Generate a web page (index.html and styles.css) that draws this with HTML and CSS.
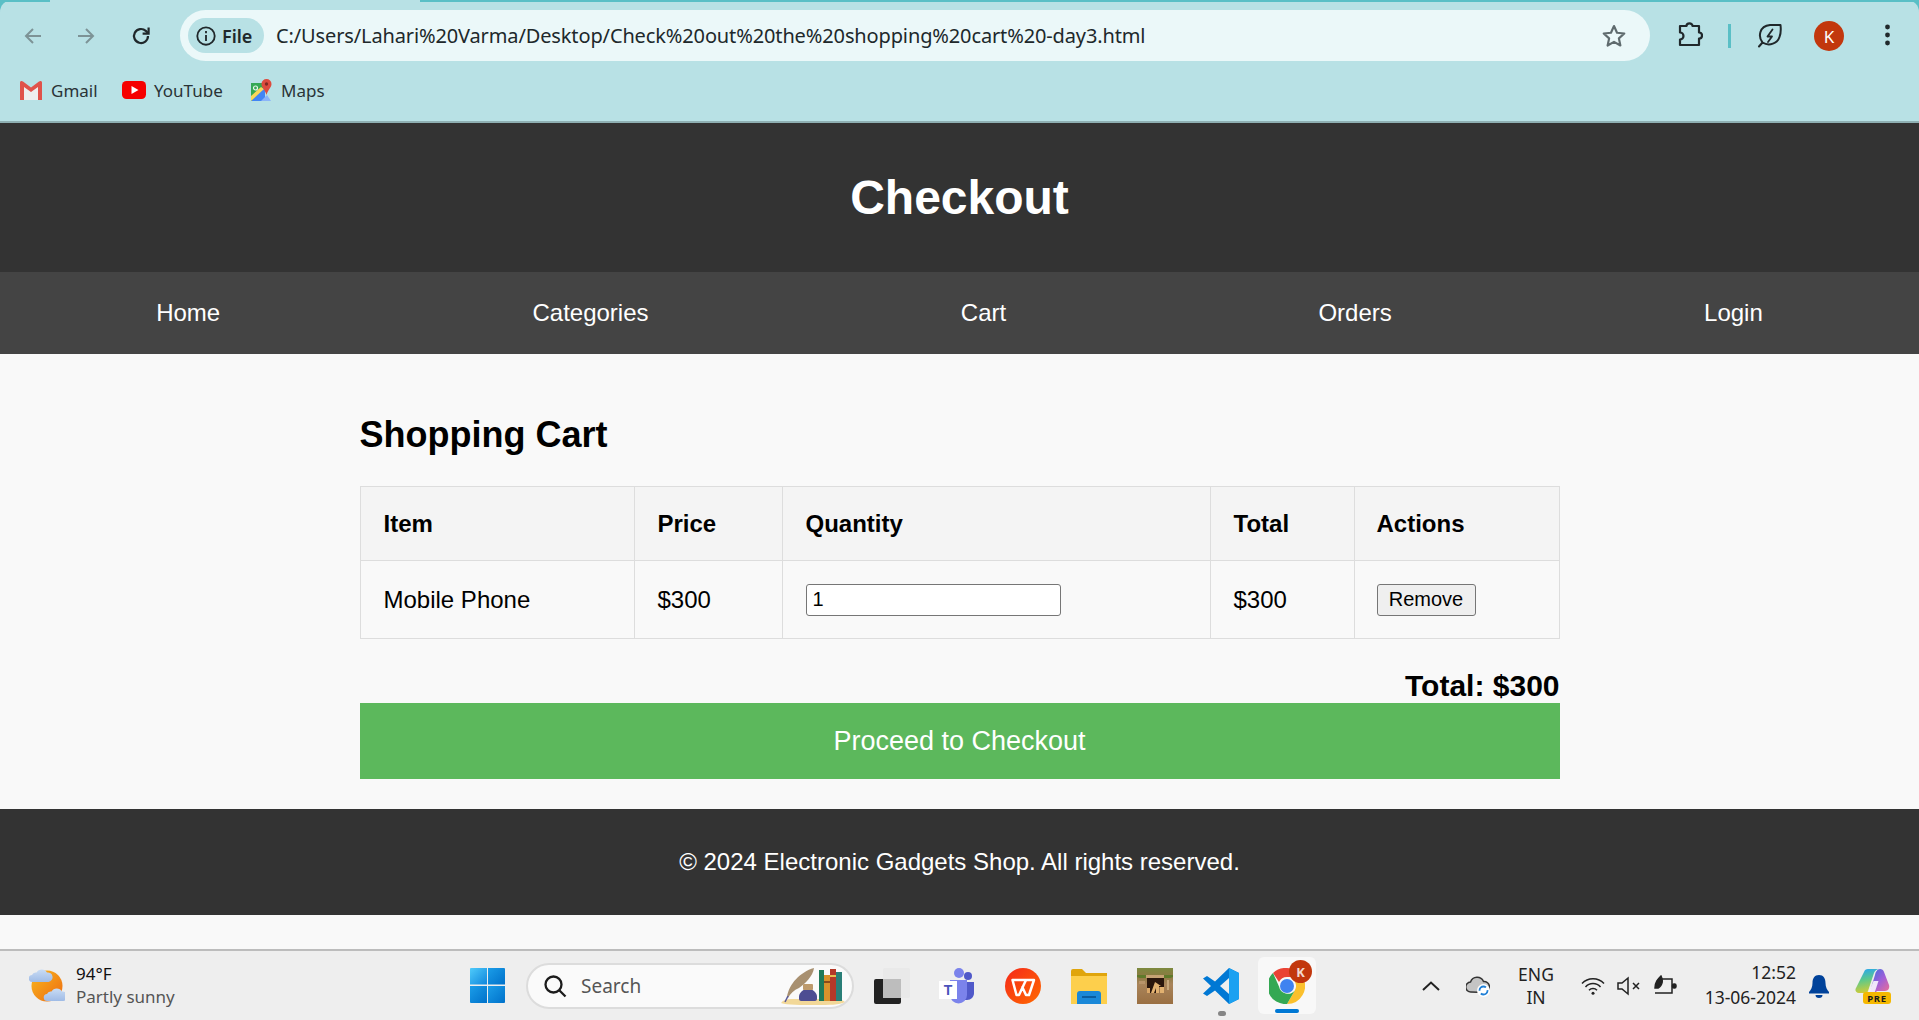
FILE: index.html
```html
<!DOCTYPE html>
<html lang="en">
<head>
<meta charset="utf-8">
<title>Checkout</title>
<link rel="stylesheet" href="styles.css">
</head>
<body>
<div class="browser">
  <div class="tabstrip"><span class="strip-a"></span><span class="strip-b"></span></div>
  <div class="frame">
    <div class="toolbar">
      <svg class="tb-icon back" viewBox="0 0 24 24" fill="none" stroke="#7d9396" stroke-width="2"><path d="M20 12H5M12 5l-7 7 7 7"/></svg>
      <svg class="tb-icon fwd" viewBox="0 0 24 24" fill="none" stroke="#7d9396" stroke-width="2"><path d="M4 12h15M12 5l7 7-7 7"/></svg>
      <svg class="tb-icon reload" viewBox="0 0 24 24" fill="none" stroke="#20282b" stroke-width="2.2"><path d="M19 12a7 7 0 1 1-2.2-5.1L19 9"/><path d="M19.6 3.6V9.6h-6" fill="none"/></svg>
      <div class="omnibox">
        <div class="chip">
          <svg class="chip-i" viewBox="0 0 24 24" fill="none" stroke="#20282b" stroke-width="2"><circle cx="12" cy="12" r="9.5"/><path d="M12 11v6.5M12 6.5v2.4"/></svg>
          <span class="chip-t">File</span>
        </div>
        <span class="url">C:/Users/Lahari%20Varma/Desktop/Check%20out%20the%20shopping%20cart%20-day3.html</span>
        <svg class="star" viewBox="0 0 24 24" fill="none" stroke="#5f6b6e" stroke-width="2" stroke-linejoin="round"><path d="M12 2.8l2.8 6.2 6.7.7-5 4.5 1.4 6.6-5.9-3.4-5.9 3.4 1.4-6.6-5-4.5 6.7-.7z"/></svg>
      </div>
      <svg class="ext" viewBox="0 0 26 26" fill="none" stroke="#20282b" stroke-width="2.2" stroke-linejoin="round"><path d="M3 4h6.500a3 2.600 0 0 1 6 0H22v6.500a2.600 2.600 0 0 1 0 6V23H3v-5.500a3.500 3.500 0 0 0 0-7z"/></svg>
      <span class="sep"></span>
      <svg class="leaf" viewBox="0 0 26 26" fill="none" stroke="#20282b" stroke-width="2" stroke-linejoin="round" stroke-linecap="round"><path d="M2 24.500l3.500-4M5.500 20.500C1 15 2 4 13 3h10.500c.5 4 .5 8-1 12-2 6-10 10-17 5.500z"/><path d="M15.500 7.500l-5 7h4.500l-4 5.500" stroke-width="1.800"/></svg>
      <span class="avatar">K</span>
      <svg class="dots" viewBox="0 0 6 24" fill="#20282b"><circle cx="3" cy="4" r="2.400"/><circle cx="3" cy="12" r="2.400"/><circle cx="3" cy="20" r="2.400"/></svg>
    </div>
    <div class="bookmarks">
      <a class="bm bm-gmail">
        <svg class="bm-i" viewBox="0 0 24 20"><path d="M1 3l11 8 11-8v17H1z" fill="#eeeeee"/><path d="M1 20V2.500C1 1 2.500.5 4 1.500l8 6 8-6c1.500-1 3-.5 3 1V20h-4V7l-7 5-7-5v13z" fill="#e0524a"/></svg>
        <span>Gmail</span>
      </a>
      <a class="bm bm-yt">
        <svg class="bm-i" viewBox="0 0 24 18"><rect width="24" height="18" rx="4.500" fill="#f60000"/><path d="M9.500 5l7 4-7 4z" fill="#fff"/></svg>
        <span>YouTube</span>
      </a>
      <a class="bm bm-maps">
        <svg class="bm-i maps-i" viewBox="0 0 22 24"><path d="M1 5h14v18H1z" fill="#34a853"/><path d="M1 23l14-14v14z" fill="#4285f4"/><path d="M1 23V18L11 9l3 2z" fill="#fbd75b"/><path d="M11 23l6-6 4 6z" fill="#8ab4f8"/><circle cx="5.500" cy="10" r="2" fill="none" stroke="#e8f5e9" stroke-width="1.200"/><path d="M16.500 1a5 5 0 0 1 5 5c0 3.500-3.500 5.500-5 11-1.500-5.500-5-7.500-5-11a5 5 0 0 1 5-5z" fill="#dd4b3e"/><circle cx="16.500" cy="6" r="1.700" fill="#802a22"/></svg>
        <span>Maps</span>
      </a>
    </div>
  </div>
</div>

<div class="page">
  <header class="site-header"><h1>Checkout</h1></header>
  <nav class="site-nav">
    <a>Home</a><a>Categories</a><a>Cart</a><a>Orders</a><a>Login</a>
  </nav>
  <main class="main">
    <h2>Shopping Cart</h2>
    <table class="cart">
      <colgroup><col class="c1"><col class="c2"><col class="c3"><col class="c4"><col class="c5"></colgroup>
      <thead><tr><th>Item</th><th>Price</th><th>Quantity</th><th>Total</th><th class="last">Actions</th></tr></thead>
      <tbody>
        <tr>
          <td>Mobile Phone</td>
          <td>$300</td>
          <td><input class="qty" type="number" value="1"></td>
          <td>$300</td>
          <td class="last"><button class="remove" type="button">Remove</button></td>
        </tr>
      </tbody>
    </table>
    <div class="grand">Total: $300</div>
    <button class="proceed" type="button">Proceed to Checkout</button>
  </main>
  <footer class="site-footer">© 2024 Electronic Gadgets Shop. All rights reserved.</footer>
  <div class="filler"></div>
</div>

<div class="taskbar">
  <div class="weather">
    <svg class="wx" viewBox="0 0 36 36">
      <defs><linearGradient id="sun" x1="0" y1="0" x2="1" y2="1"><stop offset="0" stop-color="#f8b820"/><stop offset="1" stop-color="#ee6a10"/></linearGradient><linearGradient id="cl" x1="0" y1="0" x2="0" y2="1"><stop offset="0" stop-color="#c9dcf4"/><stop offset="1" stop-color="#9fbbe6"/></linearGradient></defs>
      <circle cx="18" cy="18" r="15.500" fill="url(#sun)"/>
      <path d="M3.500 14a3.500 3.500 0 0 1-.5-7 4 4 0 0 1 4.500-2.500 6 6 0 0 1 10.500 0 4.500 4.500 0 0 1 1.500 9.500z" fill="url(#cl)"/>
      <path d="M18.500 33a3.500 3.500 0 0 1-.5-7 4 4 0 0 1 4.500-2.500 6 6 0 0 1 10.500 0 4.500 4.500 0 0 1 1.500 9.500z" fill="url(#cl)"/>
    </svg>
    <div class="wx-text"><div class="wx-temp">94°F</div><div class="wx-desc">Partly sunny</div></div>
  </div>

  <svg class="win" viewBox="0 0 35 35">
    <defs><linearGradient id="w1" x1="0" y1="0" x2="1" y2="1"><stop offset="0" stop-color="#4fcbfb"/><stop offset="1" stop-color="#0f86dc"/></linearGradient><linearGradient id="w2" x1="0" y1="0" x2="1" y2="1"><stop offset="0" stop-color="#1b9de8"/><stop offset="1" stop-color="#0071ca"/></linearGradient></defs>
    <path d="M1 0h16v16.500H0V1a1 1 0 0 1 1-1z" fill="url(#w1)"/><path d="M18 0h16a1 1 0 0 1 1 1v15.500H18z" fill="url(#w2)"/><path d="M0 18h17v17H1a1 1 0 0 1-1-1z" fill="url(#w2)"/><path d="M18 18h17v16a1 1 0 0 1-1 1H18z" fill="url(#w2)"/>
  </svg>

  <div class="search">
    <svg class="search-i" viewBox="0 0 24 24" fill="none" stroke="#1c1c1c" stroke-width="2.300"><circle cx="10.500" cy="10.500" r="8"/><path d="M16.500 16.500L22.500 22.500"/></svg>
    <span class="search-t">Search</span>
    <svg class="books" viewBox="0 0 66 38">
      <path d="M1 36c2-3 6-4 10-4h44c4 0 8 1 10 3-6 3-15 3-30 3-14 0-28 0-34-2z" fill="#f2d898"/>
      <path d="M7 30C9 17 20 5 34 1c-1 8-9 16-15 20-5 2-9 6-11 10z" fill="#a89070"/>
      <path d="M5 35l3-6" stroke="#5a5a9a" stroke-width="1.500"/>
      <path d="M19 30c0-4 3-6 6-8h6c3 2 6 4 6 8v2c0 1-1 2-2 2H21c-1 0-2-1-2-2z" fill="#4d4d92"/>
      <rect x="23" y="17" width="10" height="6" rx="1" fill="#bd9a6c"/>
      <rect x="39" y="3" width="5" height="31" fill="#1f7a5a"/>
      <rect x="44" y="8" width="6" height="26" fill="#d8922c"/>
      <rect x="44" y="14" width="6" height="2" fill="#8a4a1a"/>
      <rect x="50" y="2" width="6" height="32" fill="#b53828"/>
      <rect x="50" y="8" width="6" height="2" fill="#e6c050"/>
      <rect x="56" y="5" width="6" height="29" fill="#2a7f78"/>
    </svg>
  </div>

  <svg class="ti taskview" viewBox="0 0 36 36"><rect x="0" y="11" width="27" height="25" rx="2" fill="#222"/><rect x="9" y="0" width="27" height="30" rx="2" fill="#e8e8e8" fill-opacity=".85"/><rect x="9" y="11" width="18" height="19" fill="#bdbdbd"/></svg>

  <svg class="ti teams" viewBox="0 0 36 36"><circle cx="29" cy="8" r="4" fill="#5059c9"/><path d="M22 14h13v11c0 4-3 7-7 7h-6z" fill="#5059c9"/><circle cx="20" cy="5" r="5" fill="#7b83eb"/><path d="M11 12h17v15a8.500 8.500 0 0 1-17 0z" fill="#7b83eb"/><rect x="0" y="13" width="18" height="18" fill="#fff"/><text x="9" y="27" class="teams-t">T</text></svg>

  <svg class="ti wps" viewBox="0 0 36 36">
    <defs><linearGradient id="wg" x1="0" y1="0" x2="1" y2="1"><stop offset="0" stop-color="#f5281a"/><stop offset="1" stop-color="#ff6a00"/></linearGradient></defs>
    <circle cx="18" cy="18" r="18" fill="url(#wg)"/>
    <path d="M7.500 12H29L24 27h-3l-3.500-7.500L14 27h-2.500z" fill="none" stroke="#fff" stroke-width="2.500" stroke-linejoin="round"/>
    <path d="M21 12l-3.500 7.500" stroke="#fff" stroke-width="2.500"/>
  </svg>

  <svg class="ti folder" viewBox="0 0 36 36"><path d="M0 3a2 2 0 0 1 2-2h9l4 4h21v31H0z" fill="#e0a50c"/><path d="M0 8h36v28H0z" fill="#fdcf4c"/><path d="M6 36v-10a3 3 0 0 1 3-3h18a3 3 0 0 1 3 3v10z" fill="#1a88d8"/><rect x="11" y="28" width="14" height="2" fill="#0a5da0"/></svg>

  <svg class="ti game" viewBox="0 0 36 36">
    <defs><linearGradient id="gb" x1="0" y1="0" x2="0" y2="1"><stop offset="0" stop-color="#7c8a3e"/><stop offset=".22" stop-color="#8b7a42"/><stop offset=".45" stop-color="#a9845a"/><stop offset="1" stop-color="#9a6f42"/></linearGradient></defs>
    <rect width="36" height="36" fill="url(#gb)"/>
    <path d="M0 7h36v2l-3 1H3L0 9z" fill="#5f7a2a"/>
    <rect x="9" y="7" width="18" height="3" fill="#c6a274"/>
    <path d="M10 10h17v9H22v6H10z" fill="#2a160c"/>
    <path d="M18 14l-4 11h3l2-5v5h3V18h2z" fill="#e2b170"/>
    <rect x="10" y="20" width="3" height="5" fill="#dca868"/>
    <rect x="23" y="19" width="4" height="6" fill="#e2b170"/>
    <rect x="2" y="13" width="6" height="3" fill="#b8946a"/>
    <rect x="30" y="12" width="2" height="10" fill="#c8a87c"/>
  </svg>

  <div class="ti-wrap vscode-wrap">
    <svg class="ti vscode" viewBox="0 0 36 36"><path d="M26 0l10 5v26l-10 5-14-13.500L4 28 0 25.500 8 18 0 10.500 4 8l8 5.500z" fill="#0078d4"/><path d="M26 0l10 5v26l-10 5z" fill="#1ba1f1"/><path d="M26 10l-9 8 9 8z" fill="#eeeeee"/></svg>
    <span class="run-dot"></span>
  </div>

  <div class="chrome-wrap">
    <svg class="chrome" viewBox="0 0 36 36">
      <path d="M18 0a18 18 0 0 1 15.600 9H18a9 9 0 0 0-8 5L4 5a18 18 0 0 1 14-5z" fill="#ea4335"/>
      <path d="M33.600 9A18 18 0 0 1 18 36l7.800-13.500A9 9 0 0 0 26 14z" fill="#fbc02d"/>
      <path d="M4 5a18 18 0 0 0 14 31l7.800-13.500a9 9 0 0 1-15.800-4z" fill="#34a853"/>
      <circle cx="18" cy="18" r="7" fill="#3f83f0"/>
    </svg>
    <span class="chrome-badge">K</span>
    <span class="active-bar"></span>
  </div>

  <div class="tray">
    <svg class="tr chev" viewBox="0 0 18 10" fill="none" stroke="#222" stroke-width="2"><path d="M1 9l8-7.500 8 7.500"/></svg>
    <svg class="tr cloud" viewBox="0 0 24 22"><path d="M5 17a5 5 0 0 1-.5-10 7 7 0 0 1 13-.5 5.500 5.500 0 0 1 1 11z" fill="#c4c4c4" stroke="#333" stroke-width="1.500"/><circle cx="17.500" cy="15.500" r="6.500" fill="#fff"/><circle cx="17.500" cy="15.500" r="4" fill="none" stroke="#1f7fd6" stroke-width="1.800" stroke-dasharray="9 3"/></svg>
    <div class="lang"><div>ENG</div><div>IN</div></div>
    <svg class="tr wifi" viewBox="0 0 24 18" fill="none" stroke="#222" stroke-width="1.500"><path d="M1 6.500a15 15 0 0 1 22 0M4.500 10a10 10 0 0 1 15 0M8 13.300a5.500 5.500 0 0 1 8 0"/><circle cx="12" cy="16.200" r="1.500" fill="#222" stroke="none"/></svg>
    <svg class="tr mute" viewBox="0 0 24 20" fill="none" stroke="#222" stroke-width="1.500"><path d="M1 7v6h4l6 5V2L5 7z"/><path d="M16 7l6 6M22 7l-6 6"/></svg>
    <svg class="tr batt" viewBox="0 0 25 21" fill="none" stroke="#222" stroke-width="1.500"><path d="M10 4h10v14H3"/><rect x="20.500" y="9" width="3.500" height="4" rx="1.500" fill="#222"/><path d="M3 13C3 7 6 4 9 1c2 4 2 9-3 12z" fill="#222"/></svg>
    <div class="clock"><div>12:52</div><div>13-06-2024</div></div>
    <svg class="tr bell" viewBox="0 0 22 24"><path d="M11 1c4.500 0 6.500 3.500 6.500 8 0 4 1.500 7 3.500 9v1.500H1V18c2-2 3.500-5 3.500-9 0-4.500 2-8 6.500-8z" fill="#00429a"/><path d="M7.500 21h7a3.500 3 0 0 1-7 0z" fill="#00429a"/></svg>
    <svg class="tr copilot" viewBox="0 0 36 36">
      <defs><linearGradient id="cp" x1=".3" y1="0" x2=".5" y2="1"><stop offset="0" stop-color="#2aa8ec"/><stop offset=".45" stop-color="#5ec98a"/><stop offset="1" stop-color="#d8cc30"/></linearGradient><linearGradient id="cq" x1="0" y1="0" x2="1" y2="1"><stop offset="0" stop-color="#2a6fe0"/><stop offset=".55" stop-color="#a060d8"/><stop offset="1" stop-color="#f07090"/></linearGradient></defs>
      <path d="M9 4c.5-2 2-3 4-3h12c-3 0-5 1.500-6 4L13 23c-.5 1.500-1.500 2-3 2H4c-2.500 0-4-2-3.500-4z" fill="url(#cp)"/>
      <path d="M25 1c2 0 3.500 1 4 3l5 13c1 3-1 6-4 6H22l-2 2h-8c1.500 0 2.500-1 3-2l5-16c.5-3 2.500-6 5-6z" fill="url(#cq)"/>
      <path d="M18.500 13h5l-4 12h-6z" fill="#fff" fill-opacity=".85"/>
      <rect x="8" y="24" width="28" height="12" rx="3" fill="#f5b800"/>
      <text x="22" y="33.700" class="pre">PRE</text>
    </svg>
  </div>
</div>
</body>
</html>
```
FILE: styles.css
```css
* { box-sizing: border-box; }
html, body { margin: 0; padding: 0; height: 1020px; overflow: hidden; }
body { display: flex; flex-direction: column; font-family: "Liberation Sans", Arial, sans-serif; background: #f9f9f9; color: #000; }

/* Browser chrome */
.browser { height: 123px; background: #5abfc6; flex: none; position: relative; }
.tabstrip { height: 0; }
.frame { height: 123px; background: #b8e1e5; border-bottom: 2px solid #8fb0b3; display: flex; flex-direction: column; border-radius: 12px 12px 0 0; }
.strip-a { position: absolute; left: 0; top: 0; width: 50px; height: 2px; background: #5abfc6; z-index: 2; }
.strip-b { position: absolute; left: 420px; right: 0; top: 0; height: 2px; background: #5abfc6; z-index: 2; }
.toolbar { height: 71px; padding-top: 10px; display: flex; align-items: flex-start; }
.tb-icon { width: 24px; height: 24px; flex: none; margin-top: 14px; }
.back { margin-left: 21px; }
.fwd { margin-left: 29px; }
.reload { margin-left: 31px; }
.omnibox { width: 1470px; height: 51px; margin-left: 27px; background: #ebf8f9; border-radius: 26px; display: flex; align-items: center; padding-left: 8px; flex: none; }
.chip { width: 76px; height: 35px; background: #b8e1e5; border-radius: 18px; display: flex; align-items: center; padding-left: 7px; gap: 5px; flex: none; }
.chip-i { width: 22px; height: 22px; }
.chip-t { font: 600 18px "Noto Sans", sans-serif; color: #20282b; }
.url { font: 400 20px "Noto Sans", sans-serif; color: #20282b; margin-left: 12px; white-space: nowrap; letter-spacing: -.13px; }
.star { width: 26px; height: 26px; margin-left: auto; margin-right: 23px; flex: none; }
.ext { width: 26px; height: 26px; flex: none; margin: 12px 0 0 27px; }
.sep { width: 3px; height: 24px; background: #5abfc6; flex: none; margin: 14px 0 0 25px; }
.leaf { width: 26px; height: 26px; flex: none; margin: 12px 0 0 26px; }
.avatar { width: 30px; height: 30px; border-radius: 50%; background: #c2370d; color: #fff; font: 400 17px "Noto Sans", sans-serif; display: flex; align-items: center; justify-content: center; flex: none; margin: 11px 0 0 31px; }
.dots { width: 7px; height: 24px; flex: none; margin: 13px 0 0 40px; }
.bookmarks { display: flex; align-items: center; height: 36px; margin-top: 1px; padding-left: 19px; }
.bm { display: flex; align-items: center; font: 400 17px "Noto Sans", sans-serif; color: #2a3336; }
.bm-i { width: 24px; height: 20px; flex: none; }
.bm-gmail { gap: 8px; width: 103px; }
.bm-yt { gap: 8px; width: 128px; }
.bm-maps { gap: 9px; }
.maps-i { width: 22px; height: 24px; }

/* Page */
.page { flex: 1; display: flex; flex-direction: column; min-height: 0; }
.site-header { height: 149px; background: #333; flex: none; display: flex; align-items: center; justify-content: center; }
.site-header h1 { margin: 0; color: #fff; font-size: 48px; font-weight: 700; }
.site-nav { height: 82px; background: #444; flex: none; display: flex; align-items: center; justify-content: space-around; }
.site-nav a { color: #fff; font-size: 24px; }
.main { width: 1200px; margin: 0 auto; flex: none; height: 455px; padding-top: 55px; }
.main h2 { margin: 0; height: 77px; line-height: 52px; font-size: 36px; font-weight: 700; }
.cart { width: 1199px; border-collapse: collapse; table-layout: fixed; font-size: 24px; }
.c1 { width: 274px; } .c2 { width: 148px; } .c3 { width: 428px; } .c4 { width: 144px; } .c5 { width: 205px; }
.cart th, .cart td { border: 1px solid #ddd; padding: 0 23px; text-align: left; }
.cart .last { padding-left: 22px; }
.cart th { background: #f4f4f4; height: 74px; font-weight: 700; }
.cart td { height: 78px; }
.qty { display: block; width: 255px; height: 32px; padding: 1px 6px; border: 1px solid #767676; border-radius: 3px; background: #fff; font: 20px "Liberation Sans", sans-serif; }
.remove { display: block; width: 99px; height: 32px; padding: 0; border: 1px solid #767676; border-radius: 3px; background: #efefef; font: 20px "Liberation Sans", sans-serif; color: #000; }
.grand { text-align: right; font-size: 30px; font-weight: 700; line-height: 35px; margin-top: 29px; }
.proceed { display: block; width: 1200px; height: 76px; border: 0; background: #5cb85c; color: #fff; font: 27px "Liberation Sans", sans-serif; }
.site-footer { height: 106px; background: #333; color: #fff; flex: none; display: flex; align-items: center; justify-content: center; font-size: 24px; }
.filler { flex: 1; background: #f9f9f9; }

/* Taskbar */
.taskbar { height: 71px; flex: none; background: #eeeeee; border-top: 2px solid #bcbcbc; display: flex; align-items: center; font-family: "Noto Sans", sans-serif; color: #222; position: relative; }
.weather { display: flex; align-items: center; width: 470px; padding-left: 29px; gap: 11px; flex: none; }
.wx { width: 36px; height: 36px; flex: none; }
.wx-text { margin-bottom: 2px; }
.wx-temp { font-size: 17px; line-height: 23px; color: #111; }
.wx-desc { font-size: 17px; line-height: 23px; color: #555; }
.win { width: 35px; height: 35px; flex: none; }
.search { width: 328px; height: 46px; margin-left: 21px; border-radius: 23px; background: #fafafa; border: 2px solid #dcdcdc; display: flex; align-items: center; padding-left: 15px; flex: none; }
.search-i { width: 24px; height: 24px; flex: none; }
.search-t { font-size: 19px; color: #555; margin-left: 14px; }
.books { width: 66px; height: 38px; margin-left: auto; margin-right: 6px; flex: none; }
.ti { width: 36px; height: 36px; flex: none; display: block; }
.taskview { margin-left: 20px; }
.teams { margin-left: 29px; }
.wps { margin-left: 30px; }
.folder { margin-left: 30px; }
.game { margin-left: 30px; }
.teams-t { font: 700 14px "Liberation Sans", sans-serif; fill: #4b53bc; text-anchor: middle; }
.ti-wrap { position: relative; margin-left: 30px; flex: none; }
.run-dot { position: absolute; left: 15px; top: 43px; width: 8px; height: 5px; border-radius: 3px; background: #858585; }
.chrome-wrap { position: relative; width: 58px; height: 57px; margin-left: 19px; flex: none; background: #f8f8f8; border-radius: 6px; display: flex; align-items: center; justify-content: center; }
.chrome { width: 36px; height: 36px; display: block; }
.chrome-badge { position: absolute; left: 31px; top: 3px; width: 23px; height: 23px; border-radius: 50%; background: #c2370d; color: #f3d9cf; font: 700 13px "Noto Sans", sans-serif; display: flex; align-items: center; justify-content: center; }
.active-bar { position: absolute; left: 17px; bottom: 1px; width: 24px; height: 4px; border-radius: 2px; background: #0078d4; }
.tray { display: flex; align-items: center; flex: none; margin-left: 106px; }
.tr { display: block; flex: none; }
.chev { width: 18px; height: 10px; }
.cloud { width: 24px; height: 22px; margin-left: 26px; }
.lang { width: 42px; margin-left: 25px; text-align: center; font-size: 17.500px; line-height: 23px; }
.wifi { width: 24px; height: 18px; margin-left: 24px; }
.mute { width: 24px; height: 20px; margin-left: 12px; }
.batt { width: 25px; height: 21px; margin-left: 11px; }
.clock { width: 119px; margin-bottom: 2px; text-align: right; font-size: 17.500px; line-height: 25px; }
.bell { width: 22px; height: 24px; margin-left: 12px; }
.copilot { width: 36px; height: 36px; margin-left: 25px; }
.pre { font: 700 9.500px "Noto Sans", sans-serif; fill: #1b1b1b; text-anchor: middle; letter-spacing: .6px; }
```
